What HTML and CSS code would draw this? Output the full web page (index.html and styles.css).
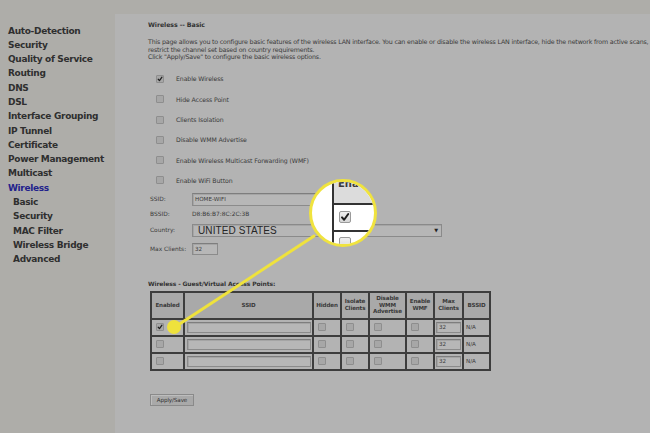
FILE: index.html
```html
<!DOCTYPE html>
<html lang="en">
<head>
<meta charset="utf-8">
<title>Wireless -- Basic</title>
<link rel="stylesheet" href="styles.css">
</head>
<body>
<div class="page">
  <nav class="sidebar">
    <a class="nav">Auto-Detection</a>
    <a class="nav">Security</a>
    <a class="nav">Quality of Service</a>
    <a class="nav">Routing</a>
    <a class="nav">DNS</a>
    <a class="nav">DSL</a>
    <a class="nav">Interface Grouping</a>
    <a class="nav">IP Tunnel</a>
    <a class="nav">Certificate</a>
    <a class="nav">Power Management</a>
    <a class="nav">Multicast</a>
    <a class="nav active">Wireless</a>
    <a class="nav sub">Basic</a>
    <a class="nav sub">Security</a>
    <a class="nav sub">MAC Filter</a>
    <a class="nav sub">Wireless Bridge</a>
    <a class="nav sub">Advanced</a>
  </nav>
  <main class="main">
    <div class="panel">
      <h1 class="title">Wireless -- Basic</h1>
      <p class="desc">This page allows you to configure basic features of the wireless LAN interface. You can enable or disable the wireless LAN interface, hide the network from active scans,<br>restrict the channel set based on country requirements.<br>Click "Apply/Save" to configure the basic wireless options.</p>
      <ul class="checks">
        <li class="check-row"><span class="cb"><svg viewBox="0 0 8 8" class="tick"><path d="M1.6 4.3 L3.3 6.2 L6.6 1.6"/></svg></span><span class="check-label">Enable Wireless</span></li>
        <li class="check-row"><span class="cb"></span><span class="check-label">Hide Access Point</span></li>
        <li class="check-row"><span class="cb"></span><span class="check-label">Clients Isolation</span></li>
        <li class="check-row"><span class="cb"></span><span class="check-label">Disable WMM Advertise</span></li>
        <li class="check-row"><span class="cb"></span><span class="check-label">Enable Wireless Multicast Forwarding (WMF)</span></li>
        <li class="check-row"><span class="cb"></span><span class="check-label">Enable WiFi Button</span></li>
      </ul>
      <div class="fields">
        <div class="field f-ssid"><span class="flabel">SSID:</span><span class="input ssid-input">HOME-WIFI</span></div>
        <div class="field f-bssid"><span class="flabel">BSSID:</span><span class="fvalue">D8:B6:B7:8C:2C:3B</span></div>
        <div class="field f-country"><span class="flabel">Country:</span><span class="select"><span class="select-text">UNITED STATES</span><span class="arrow">&#9660;</span></span></div>
        <div class="field f-max"><span class="flabel">Max Clients:</span><span class="input max-input">32</span></div>
      </div>
      <h2 class="subtitle">Wireless - Guest/Virtual Access Points:</h2>
      <table class="ap-table">
        <colgroup>
          <col class="c-en"><col class="c-ssid"><col class="c-hid"><col class="c-iso"><col class="c-wmm"><col class="c-wmf"><col class="c-max"><col class="c-bssid">
        </colgroup>
        <thead>
          <tr><th>Enabled</th><th>SSID</th><th>Hidden</th><th>Isolate<br>Clients</th><th>Disable<br>WMM<br>Advertise</th><th>Enable<br>WMF</th><th>Max<br>Clients</th><th>BSSID</th></tr>
        </thead>
        <tbody>
          <tr><td><span class="cb"><svg viewBox="0 0 8 8" class="tick"><path d="M1.6 4.3 L3.3 6.2 L6.6 1.6"/></svg></span></td><td><span class="input cell-input"></span></td><td><span class="cb"></span></td><td><span class="cb"></span></td><td><span class="cb"></span></td><td><span class="cb"></span></td><td><span class="input small-input">32</span></td><td class="na">N/A</td></tr>
          <tr><td><span class="cb"></span></td><td><span class="input cell-input"></span></td><td><span class="cb"></span></td><td><span class="cb"></span></td><td><span class="cb"></span></td><td><span class="cb"></span></td><td><span class="input small-input">32</span></td><td class="na">N/A</td></tr>
          <tr><td><span class="cb"></span></td><td><span class="input cell-input"></span></td><td><span class="cb"></span></td><td><span class="cb"></span></td><td><span class="cb"></span></td><td><span class="cb"></span></td><td><span class="input small-input">32</span></td><td class="na">N/A</td></tr>
        </tbody>
      </table>
      <button class="btn">Apply/Save</button>
    </div>
  </main>
</div>

<svg class="pointer" width="650" height="433" viewBox="0 0 650 433">
  <line x1="314" y1="236" x2="175" y2="327" />
  <circle cx="174" cy="327" r="7" />
</svg>

<div class="magnifier">
  <div class="mag-head"><span class="mag-text">Ena</span></div>
  <div class="mag-vline"></div>
  <div class="mag-hline mag-h1"></div>
  <div class="mag-hline mag-h2"></div>
  <span class="mag-cb mag-cb1"><svg viewBox="0 0 8 8" class="tick"><path d="M1.6 4.3 L3.3 6.2 L6.6 1.6"/></svg></span>
  <span class="mag-cb mag-cb2"></span>
</div>
</body>
</html>
```
FILE: styles.css
```css
* { box-sizing: border-box; }
html, body { margin: 0; padding: 0; }
body {
  width: 650px;
  height: 433px;
  overflow: hidden;
  background: #aeada9;
  font-family: "DejaVu Sans", Verdana, sans-serif;
  color: #363636;
  position: relative;
}
.page {
  display: flex;
  width: 650px;
  height: 433px;
}
.sidebar {
  width: 115px;
  flex: none;
  padding: 23.5px 0 0 8px;
  display: flex;
  flex-direction: column;
}
.nav {
  font-weight: bold;
  font-size: 9px;
  letter-spacing: -0.32px;
  line-height: 14.3px;
  height: 14.3px;
  color: #2f2f2f;
  white-space: nowrap;
}
.nav.active { color: #22228c; }
.nav.sub { padding-left: 5px; }

.main {
  flex: 1;
  padding-top: 14px;
  min-width: 0;
}
.panel {
  background: #b3b3b3;
  height: 419px;
  overflow: hidden;
  padding: 7px 0 0 33px;
}
.title {
  margin: 0;
  font-size: 6.3px;
  font-weight: bold;
  line-height: 8px;
  height: 8px;
  letter-spacing: -0.1px;
  color: #333;
  white-space: nowrap;
}
.desc {
  margin: 9px 0 0 0;
  font-size: 6.3px;
  line-height: 7.6px;
  letter-spacing: -0.18px;
  color: #3a3a3a;
  white-space: nowrap;
}
.checks {
  list-style: none;
  margin: 8px 0 0 0;
  padding: 0;
}
.check-row {
  height: 20.3px;
  display: flex;
  align-items: center;
  padding-left: 8px;
}
.check-label {
  margin-left: 12px;
  font-size: 6.2px;
  letter-spacing: -0.1px;
  color: #3a3a3a;
  white-space: nowrap;
}
.cb {
  width: 8px;
  height: 8px;
  flex: none;
  display: inline-block;
  border: 1px solid #8e8e8e;
  background: #a7a7a7;
  border-radius: 1px;
  position: relative;
}
.tick {
  display: block;
  width: 100%;
  height: 100%;
}
.tick path {
  fill: none;
  stroke: #1e1e1e;
  stroke-width: 1.6;
  stroke-linecap: round;
  stroke-linejoin: round;
}

.fields {
  margin-top: 2px;
  padding-left: 2px;
  font-size: 5.9px;
  color: #3a3a3a;
}
.field {
  display: flex;
  align-items: center;
}
.flabel {
  width: 42px;
  flex: none;
  white-space: nowrap;
}
.f-ssid { height: 13px; }
.f-bssid { height: 14px; margin-top: 1px; }
.f-country { height: 13px; margin-top: 3px; }
.f-max { height: 12px; margin-top: 6px; }
.input {
  display: inline-flex;
  align-items: center;
  height: 100%;
  border: 1px solid #8b8b8b;
  border-top-color: #7e7e7e;
  background: #b7b7b7;
  padding-left: 2px;
  font-size: 5.6px;
  color: #3a3a3a;
  box-shadow: inset 1px 1px 0 #a5a5a5;
}
.ssid-input { width: 132px; }
.max-input { width: 26px; }
.fvalue { white-space: nowrap; }
.select {
  display: flex;
  align-items: center;
  justify-content: space-between;
  width: 250px;
  height: 100%;
  border: 1px solid #8a8a8a;
  background: #b6b6b6;
  padding: 0 3px 0 5px;
  box-shadow: inset 1px 1px 0 #a5a5a5;
}
.select-text {
  font-family: "Liberation Sans", Arial, sans-serif;
  font-size: 10px;
  color: #262626;
  letter-spacing: 0.1px;
}
.arrow {
  font-size: 5px;
  color: #222;
}

.subtitle {
  margin: 25px 0 0 0;
  font-size: 6px;
  font-weight: bold;
  line-height: 8px;
  height: 8px;
  letter-spacing: -0.1px;
  color: #333;
  white-space: nowrap;
}
.ap-table {
  margin: 3px 0 0 2px;
  border-collapse: collapse;
  table-layout: fixed;
  width: 339px;
  border: 2px solid #3a3a3a;
}
.c-en { width: 33px; }
.c-ssid { width: 129px; }
.c-hid { width: 28px; }
.c-iso { width: 28px; }
.c-wmm { width: 37px; }
.c-wmf { width: 28px; }
.c-max { width: 29px; }
.c-bssid { width: 27px; }
.ap-table th, .ap-table td {
  border: 2px solid #3d3d3d;
  padding: 0;
}
.ap-table th {
  height: 27px;
  background: #a9a9a9;
  font-size: 5.6px;
  font-weight: bold;
  line-height: 6.6px;
  letter-spacing: -0.15px;
  color: #3a3a3a;
  text-align: center;
  vertical-align: middle;
}
.ap-table td {
  height: 17px;
  padding-left: 4px;
  vertical-align: middle;
  font-size: 5.6px;
  color: #3a3a3a;
}
.ap-table td .cb { vertical-align: middle; display: block; }
.ap-table td.na { padding-left: 2px; }
.cell-input {
  width: 124px;
  height: 11px;
  margin-left: -2px;
  vertical-align: middle;
}
.small-input {
  width: 25px;
  height: 11px;
  margin-left: -3px;
}
.btn {
  display: block;
  margin: 23px 0 0 2px;
  width: 44px;
  height: 12px;
  padding: 0;
  border: 1px solid #8a8a8a;
  background: #a9a9a9;
  font-family: "DejaVu Sans", Verdana, sans-serif;
  font-size: 5.6px;
  color: #333;
  letter-spacing: -0.1px;
  box-shadow: inset 1px 1px 0 #bdbdbd;
}

.pointer {
  position: absolute;
  left: 0;
  top: 0;
  pointer-events: none;
}
.pointer line {
  stroke: #efe23c;
  stroke-width: 3;
  stroke-linecap: round;
}
.pointer circle { fill: #efe23c; }

.magnifier {
  position: absolute;
  left: 309px;
  top: 179px;
  width: 68px;
  height: 68px;
  border-radius: 50%;
  border: 3px solid #f0e33e;
  background: #ffffff;
  overflow: hidden;
}
.mag-head {
  position: absolute;
  left: 22px;
  top: 0;
  width: 60px;
  height: 21px;
  background: #dcdcdc;
  overflow: hidden;
}
.mag-text {
  position: absolute;
  left: 4px;
  top: -4px;
  font-size: 10px;
  font-weight: bold;
  color: #3a3a3a;
}
.mag-vline {
  position: absolute;
  left: 20px;
  top: 0;
  width: 2px;
  height: 70px;
  background: #333;
}
.mag-hline {
  position: absolute;
  left: 20px;
  width: 60px;
  height: 2px;
  background: #333;
}
.mag-h1 { top: 21px; }
.mag-h2 { top: 48px; }
.mag-cb {
  position: absolute;
  left: 27px;
  width: 12px;
  height: 12px;
  border: 1px solid #9a9a9a;
  border-radius: 2px;
  background: linear-gradient(#f0f0f0, #d6d6d6);
}
.mag-cb1 { top: 29px; }
.mag-cb2 { top: 55px; }
```
